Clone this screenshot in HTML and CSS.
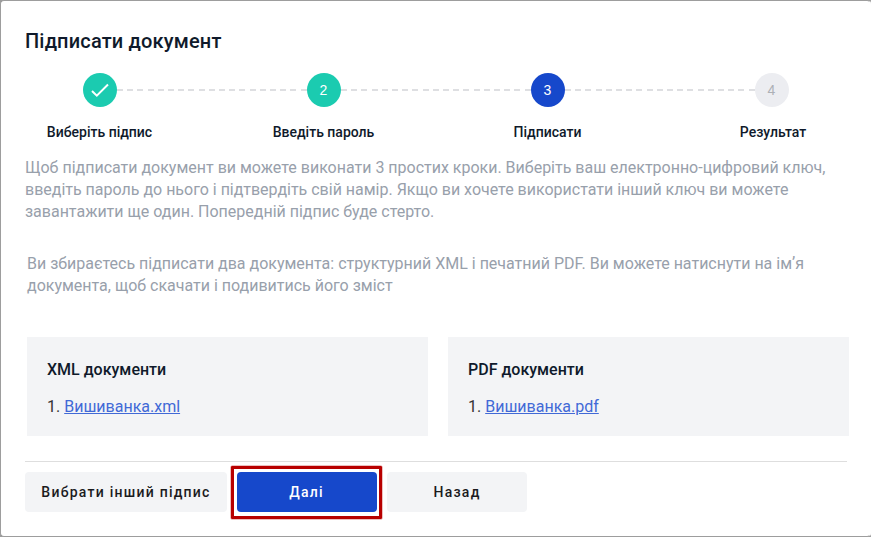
FILE: index.html
```html
<!DOCTYPE html>
<html lang="uk">
<head>
<meta charset="utf-8">
<title>Підписати документ</title>
<link rel="stylesheet" href="styles.css">
</head>
<body>
<main class="dialog">
  <h1 class="title">Підписати документ</h1>
  <ol class="stepper">
    <li class="step"><span class="dot done"><svg width="20" height="16" viewBox="0 0 20 16"><path d="M2 9 6.8 13.6 18 2.5" fill="none" stroke="#fff" stroke-width="2"/></svg></span><span class="label">Виберіть підпис</span></li>
    <li class="step"><span class="dot done">2</span><span class="label">Введіть пароль</span></li>
    <li class="step"><span class="dot active">3</span><span class="label">Підписати</span></li>
    <li class="step"><span class="dot">4</span><span class="label label-last">Результат</span></li>
  </ol>
  <p class="intro">Щоб підписати документ ви можете виконати 3 простих кроки. Виберіть ваш електронно-цифровий ключ,<br>введіть пароль до нього і підтвердіть свій намір. Якщо ви хочете використати інший ключ ви можете<br>завантажити ще один. Попередній підпис буде стерто.</p>
  <p class="note">Ви збираєтесь підписати два документа: структурний XML і печатний PDF. Ви можете натиснути на імʼя<br>документа, щоб скачати і подивитись його зміст</p>
  <div class="cards">
    <section class="card"><h2>XML документи</h2><p>1. <a href="#">Вишиванка.xml</a></p></section>
    <section class="card"><h2>PDF документи</h2><p>1. <a href="#">Вишиванка.pdf</a></p></section>
  </div>
  <footer class="actions">
    <button class="btn wide">Вибрати інший підпис</button>
    <div class="highlight"><button class="btn primary">Далі</button></div>
    <button class="btn">Назад</button>
  </footer>
</main>
</body>
</html>
```
FILE: styles.css
```css
* { box-sizing: border-box; }
body { margin: 0; background: #9d9d9d; font-family: Roboto, sans-serif; color: #0f1a2b; }
.dialog { width: 871px; height: 537px; border: 1px solid #9d9d9d; border-right-color: #fff; border-radius: 4px; background: #fff; padding: 25px 20px 0 24px; overflow: hidden; }
.title { margin: 0; font-size: 20px; line-height: 30px; font-weight: 500; letter-spacing: .17px; }
.stepper { display: grid; grid-template-columns: repeat(4, 224px); list-style: none; margin: 17px 0 0 -37px; padding: 0; }
.step { position: relative; display: flex; flex-direction: column; align-items: center; }
.step + .step::before { content: ""; position: absolute; top: 16px; right: calc(50% + 17px); width: 190px; height: 2px; background: repeating-linear-gradient(90deg, #dedfe2 0 6px, transparent 6px 10.2px); }
.dot { display: flex; align-items: center; justify-content: center; width: 34px; height: 34px; border-radius: 50%; background: #ecedf1; color: #adb0b6; font: 400 14px "Liberation Sans", sans-serif; padding-right: 1px; }
.done { background: #1bcbb0; color: #fff; }
.active { background: #1648cb; color: #fff; }
.label { margin: 15px 1px 0 0; font-size: 14px; line-height: 20px; font-weight: 500; }
.label-last { margin-right: -2px; }
.intro, .note { margin: 0; font-size: 16px; line-height: 22px; color: #98a0ab; white-space: nowrap; letter-spacing: -.007px; }
.intro { margin-top: 15px; }
.note { margin: 30px 0 0 2px; }
.cards { display: flex; gap: 20px; margin: 40px 0 0 2px; }
.card { width: 401px; height: 99px; padding: 21px 20px 0; background: #f3f4f6; }
.card h2 { margin: 0; font-size: 16px; line-height: 24px; font-weight: 500; }
.card p { margin: 14px 0 0; font-size: 16px; line-height: 22px; color: #333; }
.card a { color: #4169d6; }
.actions { display: flex; align-items: flex-start; width: 822px; margin-top: 25px; padding-top: 10px; border-top: 1px solid #dedede; }
.btn { width: 140px; height: 40px; padding: 0; border: 0; border-radius: 4px; background: #f3f4f6; color: #1b1b1d; font: 500 14px/40px Roboto, sans-serif; letter-spacing: 1.25px; }
.wide { width: 202px; }
.primary { background: #1648cb; color: #fff; padding-right: 1px; }
.highlight { position: relative; display: flex; margin: 0 10px; }
.highlight::after { content: ""; position: absolute; inset: -6px -5px -7px -6px; border: 3px solid #b80000; border-radius: 1px; box-shadow: 0 0 0 .5px #b8000080; pointer-events: none; }
```
